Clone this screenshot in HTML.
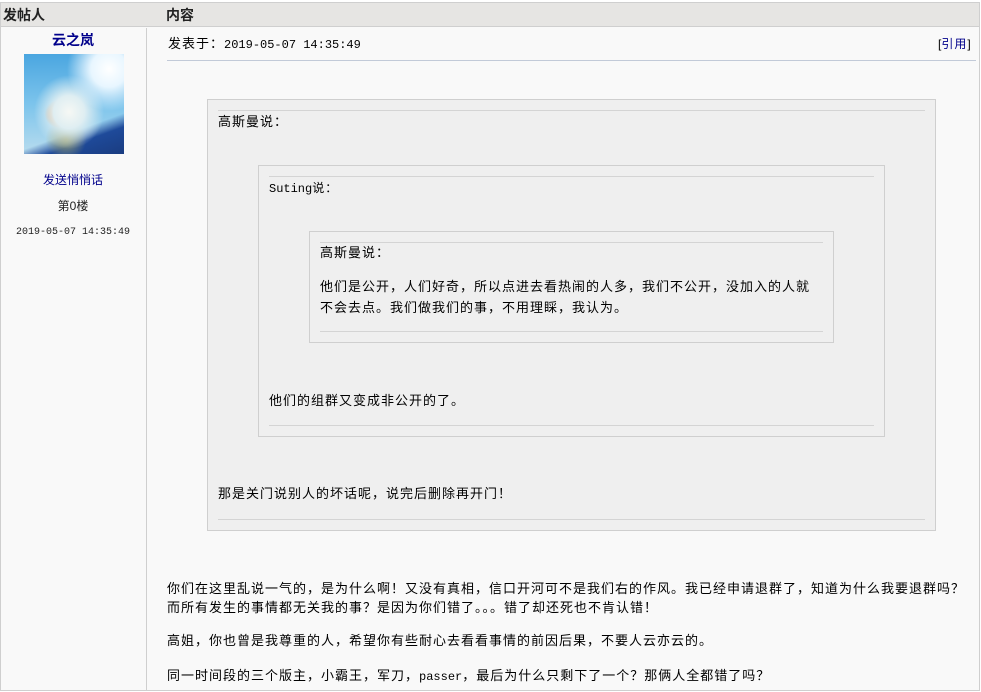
<!DOCTYPE html>
<html><head><meta charset="utf-8">
<style>
*{margin:0;padding:0;box-sizing:border-box}
body{width:981px;height:692px;background:#fff;font-family:"Liberation Sans","Noto Sans CJK SC","WenQuanYi Zen Hei",sans-serif;font-size:13px;color:#000;position:relative;overflow:hidden}
.a{position:absolute;white-space:nowrap;line-height:16px}
.t{letter-spacing:1px}
.mono{font-family:"Liberation Mono","DejaVu Sans Mono","Noto Sans CJK SC",monospace;letter-spacing:0}
.box{position:absolute;background:#efefef;border:1px solid #cfcfcf}
.hr{position:absolute;height:1px;background:#d4d4d4}
</style></head><body>
<div style="position:absolute;left:0;top:2px;width:980px;height:689px;border:1px solid #cfcfcf;background:#f9f9f9"></div>
<div style="position:absolute;left:1px;top:3px;width:978px;height:24px;background:#e6e5e3;border-bottom:1px solid #cfcfcf"></div>
<div class="a" style="left:3px;top:7px;font-weight:bold;font-size:14px;color:#222">发帖人</div>
<div class="a" style="left:166px;top:7px;font-weight:bold;font-size:14px;color:#222">内容</div>
<div style="position:absolute;left:146px;top:28px;width:1px;height:663px;background:#cfcfcf"></div>

<div class="a" style="left:0;width:146px;text-align:center;top:32px;color:#00008b;font-weight:bold;font-size:14px">云之岚</div>
<div style="position:absolute;left:24px;top:54px;width:100px;height:100px;background:
radial-gradient(circle at 85% 15%,#fff 0,#e8f6ff 15%,transparent 35%),
radial-gradient(ellipse at 45% 58%,#f6f8f4 0,#dfeef2 20%,transparent 45%),
radial-gradient(circle at 35% 60%,#d8662a 0,#e08a40 9%,transparent 16%),
radial-gradient(circle at 50% 62%,#d86a30 0,transparent 10%),
radial-gradient(circle at 42% 85%,#9aa070 0,transparent 20%),
linear-gradient(160deg,transparent 70%,#1e4a9a 80%,#1a3c80 100%),
linear-gradient(180deg,#4aa6e0,#7cc4ec 50%,#b8dcee)"></div>
<div class="a" style="left:0;width:146px;text-align:center;top:172px;color:#00008b;font-size:12px">发送悄悄话</div>
<div class="a" style="left:0;width:146px;text-align:center;top:198px;font-size:12px;color:#222">第0楼</div>
<div class="a mono" style="left:0;width:146px;text-align:center;top:225px;font-size:10px;color:#222">2019-05-07 14:35:49</div>

<div class="a t" style="left:168px;top:36px;font-size:13px">发表于：<span class="mono" style="font-size:12px">2019-05-07 14:35:49</span></div>
<div class="a" style="left:938px;top:36px;font-size:12px">[<span style="color:#00008b;letter-spacing:1px">引用</span>]</div>
<div style="position:absolute;left:167px;top:60px;width:809px;height:1px;background:#c2cad8"></div>

<div class="box" style="left:207px;top:99px;width:729px;height:432px"></div>
<div class="hr" style="left:218px;top:110px;width:707px"></div>
<div class="a t" style="left:218px;top:114px">高斯曼说：</div>
<div class="box" style="left:258px;top:165px;width:627px;height:272px"></div>
<div class="hr" style="left:269px;top:176px;width:605px"></div>
<div class="a t" style="left:269px;top:180px;font-size:12px"><span class="mono" style="font-size:12px">Suting</span>说：</div>
<div class="box" style="left:309px;top:231px;width:525px;height:112px"></div>
<div class="hr" style="left:320px;top:242px;width:503px"></div>
<div class="a t" style="left:320px;top:245px">高斯曼说：</div>
<div class="a t" style="left:320px;top:279px">他们是公开，人们好奇，所以点进去看热闹的人多，我们不公开，没加入的人就</div>
<div class="a t" style="left:320px;top:300px">不会去点。我们做我们的事，不用理睬，我认为。</div>
<div class="hr" style="left:320px;top:331px;width:503px"></div>
<div class="a t" style="left:269px;top:393px">他们的组群又变成非公开的了。</div>
<div class="hr" style="left:269px;top:425px;width:605px"></div>
<div class="a t" style="left:218px;top:486px">那是关门说别人的坏话呢，说完后删除再开门！</div>
<div class="hr" style="left:218px;top:519px;width:707px"></div>

<div class="a t" style="left:167px;top:581px">你们在这里乱说一气的，是为什么啊！又没有真相，信口开河可不是我们右的作风。我已经申请退群了，知道为什么我要退群吗？</div>
<div class="a t" style="left:167px;top:600px">而所有发生的事情都无关我的事？是因为你们错了。。。错了却还死也不肯认错！</div>
<div class="a t" style="left:167px;top:633px">高姐，你也曾是我尊重的人，希望你有些耐心去看看事情的前因后果，不要人云亦云的。</div>
<div class="a t" style="left:167px;top:668px">同一时间段的三个版主，小霸王，军刀，<span class="mono" style="font-size:12px">passer</span>，最后为什么只剩下了一个？那俩人全都错了吗？</div>
</body></html>
